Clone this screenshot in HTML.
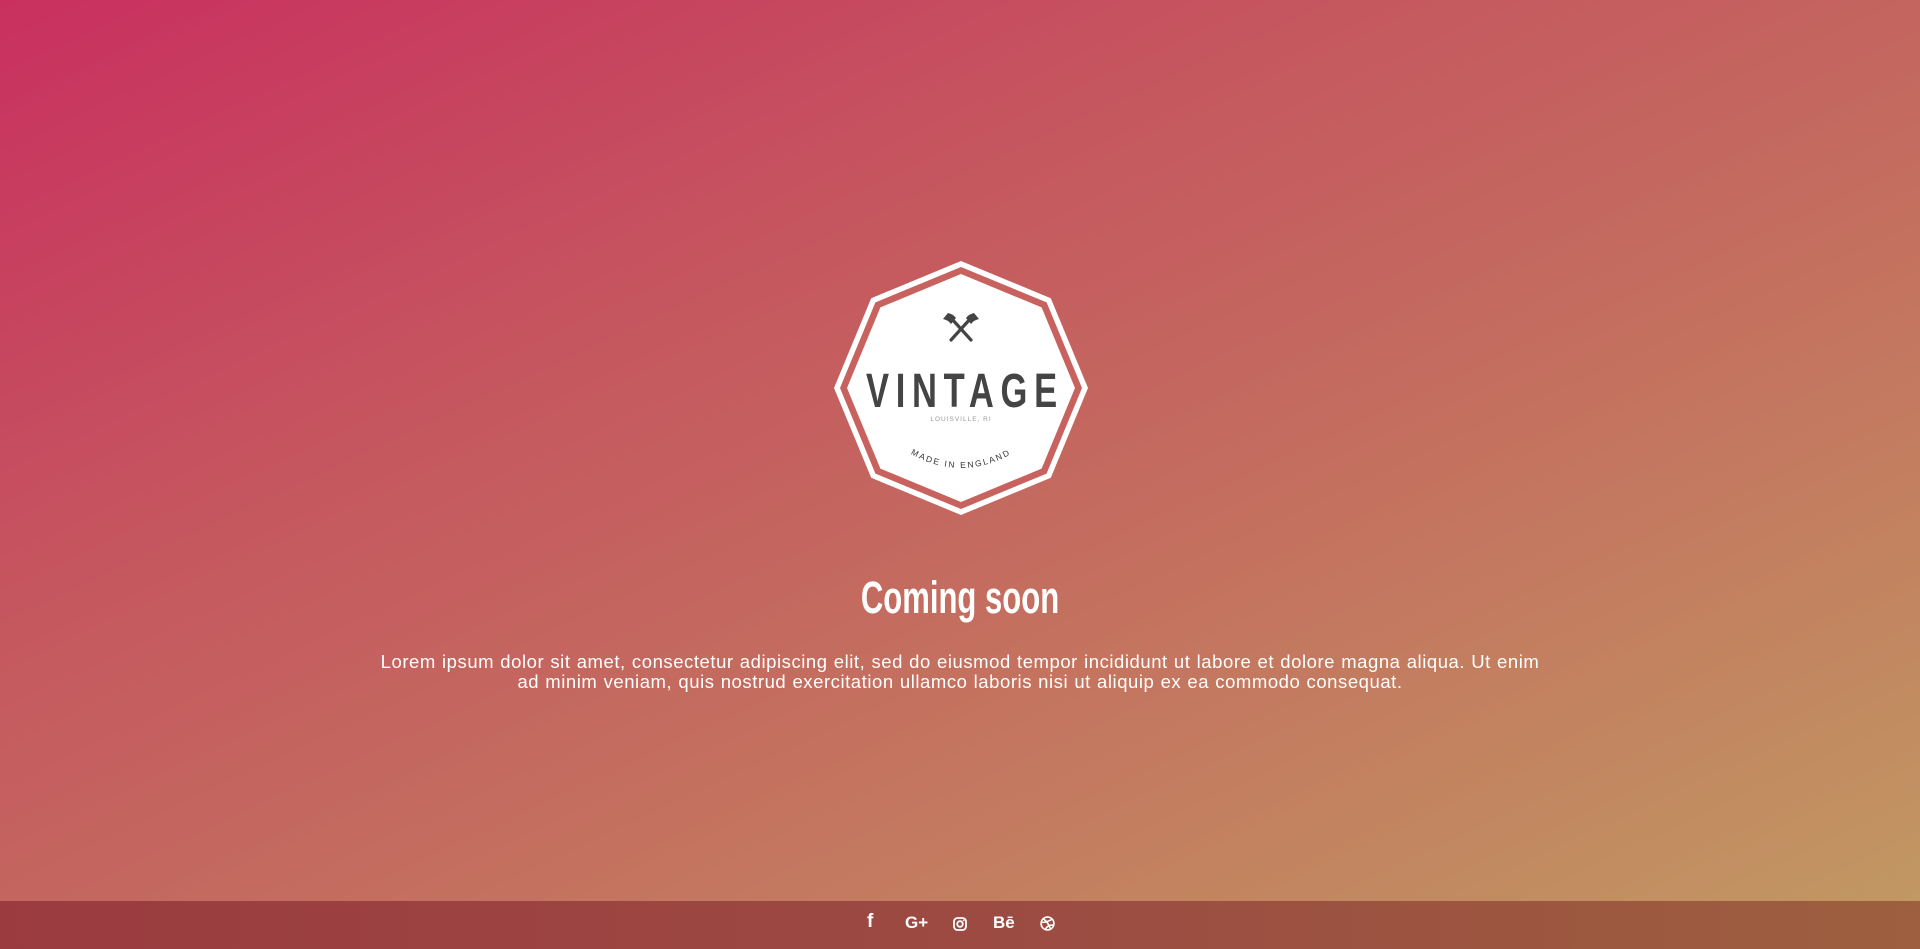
<!DOCTYPE html>
<html><head><meta charset="utf-8"><style>
html,body{margin:0;padding:0;width:1920px;height:949px;overflow:hidden}
body{background:linear-gradient(155deg,#c9305f 0%,#c5585f 35%,#c4705f 60%,#c19a62 100%);font-family:"Liberation Sans",sans-serif;position:relative}
.logo{position:absolute;left:834px;top:261px}
h1{position:absolute;top:572px;left:0;width:1920px;text-align:center;margin:0;color:#fff;font-family:"Liberation Sans",sans-serif;font-weight:bold;font-size:45px;transform:scaleX(0.69)}
p{position:absolute;top:652px;left:0;width:1920px;text-align:center;margin:0;color:#fff;font-size:18.5px;line-height:20px;letter-spacing:0.55px;word-spacing:0.5px}
.foot{position:absolute;left:0;top:901px;width:1920px;height:48px;background:linear-gradient(90deg,#9b3b40,#9c4a42 50%,#9d5f3f)}
.ic{position:absolute;top:913px;color:#fff;font-weight:bold;font-size:17px}
</style></head><body>
<svg class="logo" width="254" height="254" viewBox="-127 -127 254 254">
<polygon fill="#fff" points="0,-127 89.8,-89.8 127,0 89.8,89.8 0,127 -89.8,89.8 -127,0 -89.8,-89.8"/>
<polygon fill="#c8625f" points="0,-121 85.6,-85.6 121,0 85.6,85.6 0,121 -85.6,85.6 -121,0 -85.6,-85.6"/>
<polygon fill="#fff" points="0,-114 80.6,-80.6 114,0 80.6,80.6 0,114 -80.6,80.6 -114,0 -80.6,-80.6"/>
<g stroke="#444" stroke-width="3.2" stroke-linecap="round"><line x1="-10" y1="-70" x2="10" y2="-48"/><line x1="10" y1="-70" x2="-10" y2="-48"/></g>
<path fill="#444" d="M-13,-75 q5,1 8,5 l-5,6 q-3,-4 -8,-5z M13,-75 q-5,1 -8,5 l5,6 q3,-4 8,-5z"/>
<text x="-132" y="19" transform="scale(0.72,1)" font-family="Liberation Sans,sans-serif" font-weight="bold" font-size="48" fill="#444" letter-spacing="9.3">VINTAGE</text>
<text x="0" y="33" text-anchor="middle" font-family="Liberation Sans,sans-serif" font-size="6.5" fill="#999" letter-spacing="1">LOUISVILLE, RI</text>
<path id="arc" d="M-60,60 Q0,100 60,60" fill="none"/>
<text font-family="Liberation Sans,sans-serif" font-size="8.5" fill="#333" letter-spacing="1.8"><textPath href="#arc" startOffset="50%" text-anchor="middle">MADE IN ENGLAND</textPath></text>
</svg>
<h1>Coming soon</h1>
<p>Lorem ipsum dolor sit amet, consectetur adipiscing elit, sed do eiusmod tempor incididunt ut labore et dolore magna aliqua. Ut enim<br>ad minim veniam, quis nostrud exercitation ullamco laboris nisi ut aliquip ex ea commodo consequat.</p>
<div class="foot"></div>
<span class="ic" style="left:867px;font-size:19px;top:911px">f</span>
<span class="ic" style="left:905px">G+</span>
<svg style="position:absolute;left:953px;top:917px" width="14" height="14" viewBox="0 0 14 14"><rect x="1" y="1" width="12" height="12" rx="3.5" fill="none" stroke="#fff" stroke-width="1.8"/><circle cx="7" cy="7" r="2.8" fill="none" stroke="#fff" stroke-width="1.8"/><circle cx="10.6" cy="3.4" r="0.9" fill="#fff"/></svg>
<span class="ic" style="left:993px">Bē</span>
<svg style="position:absolute;left:1040px;top:916px" width="15" height="15" viewBox="0 0 14 14" fill="none" stroke="#fff" stroke-width="1.5"><circle cx="7" cy="7" r="6"/><path d="M3,2.5 Q8,6 10,13 M1.2,6 Q7,6 11.5,2.8 M5,12.5 Q7,8 12.8,8.5"/></svg>
</body></html>
